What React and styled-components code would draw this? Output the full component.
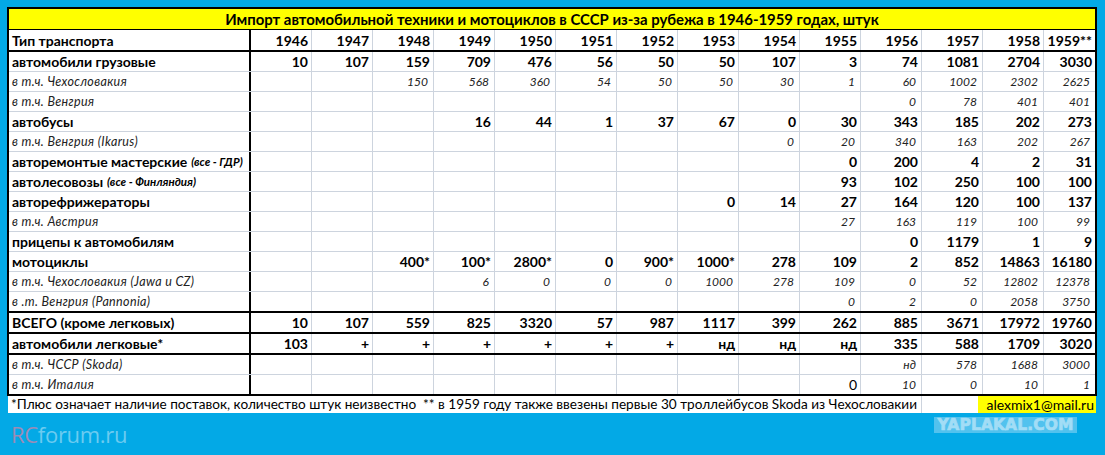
import React from "react";
import styled, { createGlobalStyle } from "styled-components";

const FONT = `"Lato", "Open Sans", "Noto Sans", sans-serif`;
const GRID = "#cdd4de";

const GlobalStyle = createGlobalStyle`
  html, body { margin: 0; padding: 0; background: #03a9e6; }
  body { font-family: ${FONT}; color: #000; }
`;

const Page = styled.div`
  width: 1105px;
  height: 455px;
  box-sizing: border-box;
  padding: 7px 8px 0 7px;
  background: #03a9e6;
  overflow: hidden;
`;

const Sheet = styled.div`
  width: 1090px;
  box-sizing: border-box;
  border: 2px solid #000;
  background: #fff;
`;

const TitleBar = styled.div`
  height: 20px;
  line-height: 20px;
  background: #ffff00;
  border-bottom: 1px solid #000;
  text-align: center;
  font-weight: 700;
  font-size: 14.9px;
  white-space: nowrap;
`;

const Row = styled.div`
  display: grid;
  grid-template-columns: 242px repeat(13, 61px) 1fr;
  height: ${(p) => (p.$header ? 20 : 19)}px;
  border-bottom: ${(p) =>
    p.$last ? "none" : p.$thick ? "2px solid #000" : `1px solid ${GRID}`};
`;

const LabelCell = styled.div`
  box-sizing: border-box;
  border-right: 2px solid #000;
  padding-left: 3px;
  display: flex;
  align-items: center;
  white-space: nowrap;
  overflow: hidden;
  font-size: ${(p) => (p.$sub ? "12.5px" : "14px")};
  letter-spacing: ${(p) => (p.$sub ? "0.35px" : "0")};
  font-weight: ${(p) => (p.$sub ? 400 : 700)};
  font-style: ${(p) => (p.$sub ? "italic" : "normal")};
  color: ${(p) => (p.$sub ? "#222" : "#000")};
`;

const Note = styled.span`
  font-size: 11.5px;
  font-style: italic;
  font-weight: 700;
  margin-left: 4px;
`;

const NumCell = styled.div`
  box-sizing: border-box;
  border-right: ${(p) => (p.$end ? "none" : `1px solid ${GRID}`)};
  display: flex;
  align-items: center;
  justify-content: flex-end;
  white-space: nowrap;
  padding-right: ${(p) => (p.$kind === "sub" ? "5px" : "3px")};
  font-size: ${(p) => (p.$kind === "sub" ? "12px" : "14px")};
  font-weight: ${(p) => (p.$kind === "bold" ? 700 : 400)};
  font-style: ${(p) => (p.$kind === "sub" ? "italic" : "normal")};
  color: ${(p) => (p.$kind === "sub" ? "#222" : "#000")};
`;

const Footer = styled.div`
  width: 1088px;
  margin-left: 1px;
  height: 17px;
  display: grid;
  grid-template-columns: 914px 56px 1fr;
  background: #fff;
  font-size: 13.6px;
  line-height: 17px;
  white-space: nowrap;
`;

const FootNote = styled.div`
  padding-left: 3px;
  border-right: 1px solid ${GRID};
  overflow: hidden;
`;

const FootGap = styled.div``;

const Email = styled.div`
  background: #ffff00;
  text-align: right;
  padding-right: 2px;
  font-size: 14px;
`;

const Watermarks = styled.div`
  display: flex;
  justify-content: space-between;
  align-items: flex-start;
  padding: 4px 20px 0 4px;
`;

const RcLogo = styled.div`
  margin-top: 2px;
  font-family: "Open Sans", "Noto Sans", sans-serif;
  font-size: 22px;
  letter-spacing: -0.3px;
  color: #6ccbf0;
`;

const RcMark = styled.span`
  color: #9c8cb6;
`;

const Yap = styled.div`
  width: 143px;
  height: 16px;
  background: #52c2ee;
  color: #a2ddf6;
  font-family: "DejaVu Sans", sans-serif;
  font-weight: 900;
  font-size: 15.5px;
  line-height: 16px;
  text-align: center;
  letter-spacing: 0.1px;
  -webkit-text-stroke: 0.7px #a2ddf6;
`;

const years = ["1946", "1947", "1948", "1949", "1950", "1951", "1952", "1953", "1954", "1955", "1956", "1957", "1958", "1959**"];

const B = (arr) => arr.map((v) => (v === "" ? null : { v, k: "bold" }));
const S = (arr) => arr.map((v) => (v === "" ? null : { v, k: "sub" }));
const blank = (n) => Array(n).fill("");

const rows = [
  { label: "автомобили грузовые", cells: B(["10", "107", "159", "709", "476", "56", "50", "50", "107", "3", "74", "1081", "2704", "3030"]) },
  { label: "в т.ч. Чехословакия", sub: true, cells: S(["", "", "150", "568", "360", "54", "50", "50", "30", "1", "60", "1002", "2302", "2625"]) },
  { label: "в т.ч. Венгрия", sub: true, cells: S([...blank(10), "0", "78", "401", "401"]) },
  { label: "автобусы", cells: B(["", "", "", "16", "44", "1", "37", "67", "0", "30", "343", "185", "202", "273"]) },
  { label: "в т.ч. Венгрия (Ikarus)", sub: true, cells: S([...blank(8), "0", "20", "340", "163", "202", "267"]) },
  { label: "авторемонтые мастерские", note: "(все - ГДР)", cells: B([...blank(9), "0", "200", "4", "2", "31"]) },
  { label: "автолесовозы", note: "(все - Финляндия)", cells: B([...blank(9), "93", "102", "250", "100", "100"]) },
  { label: "авторефрижераторы", cells: B([...blank(7), "0", "14", "27", "164", "120", "100", "137"]) },
  { label: "в т.ч. Австрия", sub: true, cells: S([...blank(9), "27", "163", "119", "100", "99"]) },
  { label: "прицепы к автомобилям", cells: B([...blank(10), "0", "1179", "1", "9"]) },
  { label: "мотоциклы", cells: B(["", "", "400*", "100*", "2800*", "0", "900*", "1000*", "278", "109", "2", "852", "14863", "16180"]) },
  { label: "в т.ч. Чехословакия (Jawa и CZ)", sub: true, cells: S(["", "", "", "6", "0", "0", "0", "1000", "278", "109", "0", "52", "12802", "12378"]) },
  { label: "в .т. Венгрия (Pannonia)", sub: true, thick: true, cells: S([...blank(9), "0", "2", "0", "2058", "3750"]) },
  { label: "ВСЕГО (кроме легковых)", thick: true, cells: B(["10", "107", "559", "825", "3320", "57", "987", "1117", "399", "262", "885", "3671", "17972", "19760"]) },
  { label: "автомобили легковые*", thick: true, cells: B(["103", "+", "+", "+", "+", "+", "+", "нд", "нд", "нд", "335", "588", "1709", "3020"]) },
  { label: "в т.ч. ЧССР (Skoda)", sub: true, cells: S([...blank(10), "нд", "578", "1688", "3000"]) },
  {
    label: "в т.ч. Италия",
    sub: true,
    last: true,
    cells: [...blank(9).map(() => null), { v: "0", k: "plain" }, ...S(["10", "0", "10", "1"])],
  },
];

export default function App() {
  return (
    <Page>
      <GlobalStyle />
      <Sheet>
        <TitleBar>Импорт автомобильной техники и мотоциклов в СССР из-за рубежа в 1946-1959 годах, штук</TitleBar>
        <Row $header $thick>
          <LabelCell>Тип транспорта</LabelCell>
          {years.map((y, i) => (
            <NumCell key={y} $kind="bold" $end={i === years.length - 1}>
              {y}
            </NumCell>
          ))}
        </Row>
        {rows.map((r, ri) => (
          <Row key={ri} $thick={r.thick} $last={r.last}>
            <LabelCell $sub={r.sub}>
              {r.label}
              {r.note && <Note>{r.note}</Note>}
            </LabelCell>
            {r.cells.map((c, i) => (
              <NumCell key={i} $kind={c ? c.k : r.sub ? "sub" : "bold"} $end={i === 13}>
                {c ? c.v : ""}
              </NumCell>
            ))}
          </Row>
        ))}
      </Sheet>
      <Footer>
        <FootNote>
          *Плюс означает наличие поставок, количество штук неизвестно&nbsp;&nbsp;** в 1959 году также ввезены первые 30 троллейбусов Skoda из Чехословакии
        </FootNote>
        <FootGap />
        <Email>alexmix1@mail.ru</Email>
      </Footer>
      <Watermarks>
        <RcLogo>
          <RcMark>RC</RcMark>forum.ru
        </RcLogo>
        <Yap>YAPLAKAL.COM</Yap>
      </Watermarks>
    </Page>
  );
}
